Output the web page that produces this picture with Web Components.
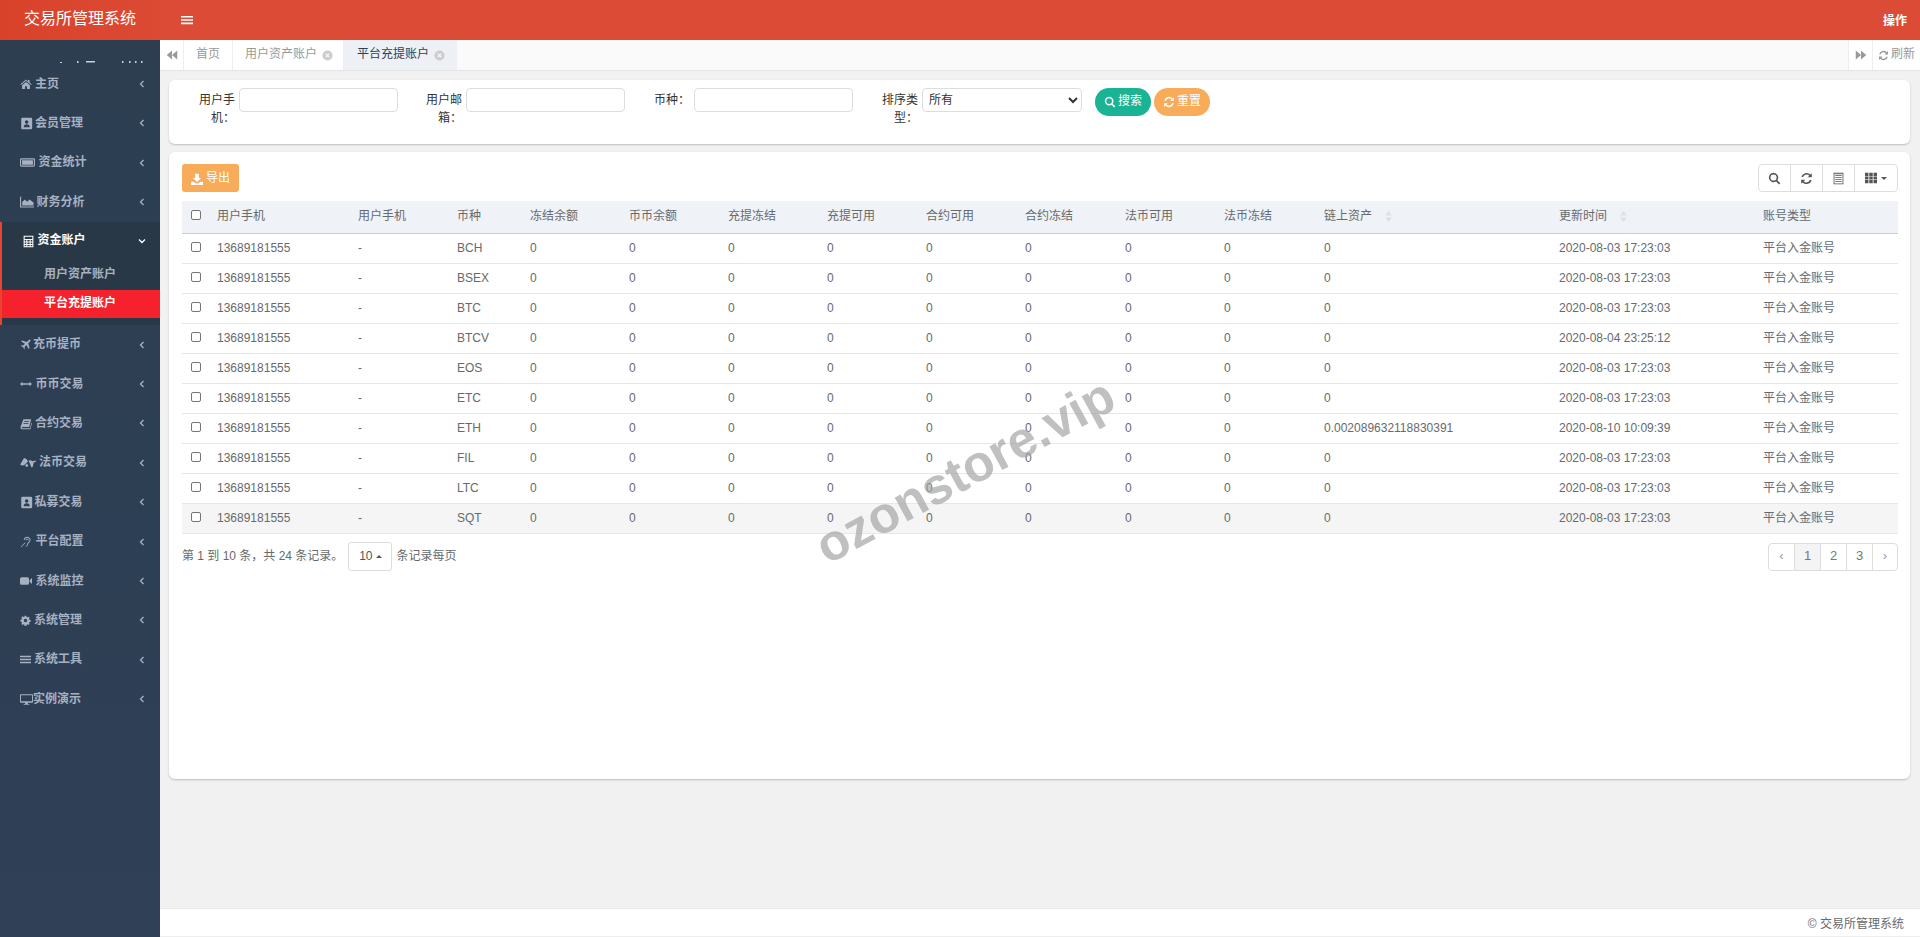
<!DOCTYPE html>
<html lang="zh">
<head>
<meta charset="utf-8">
<title>交易所管理系统</title>
<style>
  html, body { margin: 0; height: 100%; overflow: hidden; }
  body { font: 12px/1.42857 "Liberation Sans", "Noto Sans CJK SC", sans-serif; color: #676a6c; background: #f1f1f1; }
</style>
</head>
<body>
<admin-app></admin-app>
<script>
// font-awesome style icons, drawn by hand
const ICONS = {
  home: '<path d="M8 2 .5 8.400l.9 1L8 3.700l6.600 5.700.9-1-2.800-2.400V2.600h-2v2zM2.800 9.800V14.500h3.900v-3.500h2.600v3.500h3.900V9.800L8 5.300z"/>',
  card: '<path fill-rule="evenodd" d="M3 1h10.500A1.500 1.500 0 0 1 15 2.500v11a1.500 1.500 0 0 1-1.500 1.500H3a1.500 1.500 0 0 1-1.500-1.500v-11A1.500 1.500 0 0 1 3 1zm5.200 3a2.200 2.200 0 1 0 0 4.400 2.200 2.200 0 0 0 0-4.400zM4.500 12.500h7.500c0-2.200-1.400-3.500-3.700-3.500s-3.800 1.300-3.800 3.500z"/>',
  money: '<path fill-rule="evenodd" d="M1.500 3.500h13A1.500 1.500 0 0 1 16 5v6a1.500 1.500 0 0 1-1.500 1.500h-13A1.500 1.500 0 0 1 0 11V5a1.500 1.500 0 0 1 1.500-1.500zm0 1.200a.3.3 0 0 0-.3.3v6c0 .2.100.3.3.3h13c.2 0 .3-.1.3-.3V5a.3.3 0 0 0-.3-.3zM2.200 5.700h11.600v4.600H2.200z"/>',
  chart: '<path d="M0 2h1.300v11H16v1.300H0zM2.500 12V8l3-3 2.600 2.600L11 5l4.500 3.500V12z"/>',
  calc: '<path fill-rule="evenodd" d="M2 1h12v14H2zm1.300 1.300v2.700h9.400V2.300zm0 4v1.800h2v-1.800zm3.300 0v1.800h2.800v-1.800zm4.100 0v1.800h2v-1.800zM3.300 9.300v1.800h2V9.300zm3.300 0v1.800h2.800V9.300zm4.100 0v1.800h2V9.300zM3.300 12.300v1.400h2v-1.400zm3.300 0v1.400h2.800v-1.400zm4.100 0v1.400h2v-1.400z"/>',
  plane: '<path d="M15.200 1.100c-.7-.5-1.900-.2-3 .9L9.900 4.300 3 2.300 1.700 3.600l5.600 3.300-2.700 2.700-2.400-.4-1 1 3.200 1.600 1.600 3.200 1-1-.4-2.400 2.700-2.700 3.300 5.600 1.300-1.300-2-6.900 2.300-2.300c1.100-1.100 1.400-2.300.8-2.900z"/>',
  arrows: '<path d="M0 8l3.400-3v2h9.200V5L16 8l-3.400 3V9H3.400v2z"/>',
  book: '<path fill-rule="evenodd" d="M4.500 1.500H15l-2.800 10.500H3.500c-.9 0-1.200.5-1.100 1 .1.400.5.700 1.100.7h9.700l2-7.500.8.400-2.200 8.400H3.300C1.700 15 .7 14 .7 12.600c0-.4 0-.7.200-1.200zM5.500 4l-.2 1h6.500l.3-1zm-.7 2.500-.2 1h6.500l.3-1z"/>',
  law: '<path d="M4 3 .2 9.500c.6.700 1.400 1 2.300 1s1.800-.3 2.500-.9L8 6.400 6.500 4zM8.500 5.500l3 7 1.200-.5 1-4.500L16 6.800l-.4-1.400-2.800.8-2.300-.9zM7 8.500l-2 2 1.500 1.500 2-1z"/>',
  deaf: '<path d="M9.500 1C6.900 1 5 2.900 5 5.300h1.200C6.200 3.500 7.600 2.200 9.500 2.200s3.300 1.400 3.300 3.100c0 1.300-.7 1.900-1.500 2.600-.9.800-1.800 1.600-1.900 3.300-.1 1.100-.8 1.700-1.700 1.700v1.200c1.600 0 2.800-1.100 2.900-2.800.1-1.200.7-1.700 1.500-2.400C13 8 14 7 14 5.300 14 2.900 12 1 9.500 1zM9.500 3.500C8.300 3.500 7.300 4.400 7.300 5.600h1.100c0-.6.500-1 1.100-1s1.100.5 1.100 1.100h1.100c0-1.200-1-2.200-2.200-2.200zM6.500 8.500 1 14.300l.6.700 5.600-5.800z"/>',
  video: '<path d="M2 3h8a2 2 0 0 1 2 2v6a2 2 0 0 1-2 2H2a2 2 0 0 1-2-2V5a2 2 0 0 1 2-2zm10.800 4L16 4v8l-3.200-3z"/>',
  cog: '<path fill-rule="evenodd" d="M6.800 1h2.400l.4 1.900 1.200.5 1.600-1 1.700 1.700-1 1.600.5 1.200 1.900.4v2.400l-1.900.4-.5 1.200 1 1.600-1.700 1.700-1.600-1-1.200.5-.4 1.900H6.800l-.4-1.900-1.200-.5-1.600 1-1.700-1.700 1-1.600-.5-1.200L.5 9.200V6.800l1.900-.4.500-1.200-1-1.600 1.700-1.700 1.600 1 1.200-.5zM8 5.500a2.500 2.500 0 1 0 0 5 2.500 2.500 0 0 0 0-5z"/>',
  bars: '<path d="M0 2.500h16v2.200H0zM0 6.900h16v2.200H0zM0 11.300h16v2.200H0z"/>',
  desktop: '<path fill-rule="evenodd" d="M1 1.500h14A1 1 0 0 1 16 2.500v8.500a1 1 0 0 1-1 1H9.500l.4 1.500h1.600v1H4.500v-1h1.600l.4-1.500H1a1 1 0 0 1-1-1V2.500a1 1 0 0 1 1-1zm.2 1.200v7.300h13.600V2.700z"/>',
  search: '<path fill-rule="evenodd" d="M6.800 1a5.800 5.800 0 0 1 4.700 9.200l3.600 3.600-1.500 1.500-3.600-3.600A5.800 5.800 0 1 1 6.800 1zm0 2a3.800 3.800 0 1 0 0 7.600 3.800 3.800 0 0 0 0-7.600z"/>',
  refresh: '<path d="M14.500 1.500v5h-5l1.900-1.900A4.500 4.500 0 0 0 3.800 6.300H1.700A6.500 6.500 0 0 1 12.800 3.200zM1.500 14.500v-5h5l-1.900 1.900a4.500 4.500 0 0 0 7.600-1.700h2.100A6.500 6.500 0 0 1 3.200 12.800z"/>',
  list: '<path fill-rule="evenodd" d="M2 1h12v14H2zm1 1v12h10V2zm1 1.500h8v1H4zm0 2.500h8v1H4zm0 2.500h8v1H4zm0 2.500h8v1H4z"/>',
  th: '<path d="M0 1h4.600v4.200H0zM5.700 1h4.600v4.200H5.700zM11.400 1H16v4.200h-4.600zM0 5.900h4.600v4.200H0zM5.700 5.900h4.600v4.200H5.700zM11.400 5.900H16v4.200h-4.600zM0 10.800h4.600V15H0zM5.700 10.800h4.600V15H5.700zM11.400 10.800H16V15h-4.600z"/>',
  download: '<path d="M5.500 1h5v5.500h3L8 12 2.500 6.500h3zM0 11.500h3.500L6.500 14h3l3-2.500H16V16H0z"/>',
  backward: '<path d="M8 2v12L1 8zM15 2v12L8 8z"/>',
  forward: '<path d="M1 2v12l7-6zM8 2v12l7-6z"/>',
};
const icon = (name, size) =>
  `<svg width="${size}" height="${size}" viewBox="0 0 16 16" fill="currentColor" aria-hidden="true">${ICONS[name]}</svg>`;

class SideNav extends HTMLElement {
  connectedCallback() {
    // icon, label, icon size, width reserved before the label
    const items = [
      ['home', '主页', 12, 15], ['card', '会员管理', 13, 15], ['money', '资金统计', 15, 18.500], ['chart', '财务分析', 14, 16.500],
      ['calc', '资金账户', 13, 15.500, true],
      ['plane', '充币提币', 11, 13], ['arrows', '币币交易', 12, 15.500], ['book', '合约交易', 12, 15], ['law', '法币交易', 16, 19],
      ['card', '私募交易', 13, 14.500], ['deaf', '平台配置', 12, 15.500], ['video', '系统监控', 12, 15.500], ['cog', '系统管理', 11, 14],
      ['bars', '系统工具', 11, 14], ['desktop', '实例演示', 13, 13],
    ];
    const row = ([ic, label, size, width, open]) => `
      <a class="item${open ? ' open' : ''}">
        <span class="ic" style="width:${width}px">${icon(ic, size)}</span>
        <span class="lb">${label}</span>
        <svg class="arrow" width="8" height="8" viewBox="0 0 8 8" fill="none" stroke="currentColor" stroke-width="1.300">
          <path d="${open ? 'M1 2.500 4 5.500 7 2.500' : 'M5.500 1 2.500 4 5.500 7'}"/>
        </svg>
      </a>`;
    this.attachShadow({ mode: 'open' });
    this.shadowRoot.innerHTML = `
      <style>
        :host { display: block; width: 160px; flex: none; height: 100%; overflow: hidden;
          background: linear-gradient(to bottom, #2c3e50, #2f4057); color: #a7b1c2; }
        .logo { height: 40px; line-height: 38px; text-align: center; color: #fff; font-size: 16px;
          background: linear-gradient(to right, #d9422a, #dc4a34); }
        .spacer { height: 24.500px; display: flex; align-items: flex-end; }
        .spacer svg { display: block; margin-bottom: 1.500px; }
        .item { display: flex; align-items: center; height: 39.400px; padding-left: 20px; font-weight: 600; position: relative; box-sizing: border-box; }
        .ic { display: flex; align-items: center; flex: none; }
        .arrow { position: absolute; left: 138px; top: 15.500px; }
        .active { background: #293846; border-left: 2px solid #e8442f; padding-bottom: 7px; height: 103px; box-sizing: border-box; }
        .active .item { height: 38px; color: #fff; }
        .active .arrow { left: 136px; top: 15px; }
        .sub { display: block; height: 30px; line-height: 28px; padding-left: 42px; font-weight: 600; color: #a7b1c2; }
        .sub.cur { background: #f5222d; color: #fff; height: 28px; line-height: 27px; }
      </style>
      <div class="logo">交易所管理系统</div>
      <div class="spacer">
        <svg width="160" height="2" viewBox="0 0 160 2" fill="#c8d0da">
          <path d="M60 1h2v1h-2zM77 0h1.500v2H77zM86 0h9v1.500h-9zM122 0h1.500v2H122zM129 0h1.500v2H129zM135 0h1.500v2H135zM141 0h1.500v2H141z"/>
        </svg>
      </div>
      ${items.slice(0, 4).map(row).join('')}
      <div class="active">
        ${row(items[4])}
        <a class="sub">用户资产账户</a>
        <a class="sub cur">平台充提账户</a>
      </div>
      ${items.slice(5).map(row).join('')}
    `;
  }
}
customElements.define('side-nav', SideNav);

class TopBar extends HTMLElement {
  connectedCallback() {
    this.attachShadow({ mode: 'open' });
    this.shadowRoot.innerHTML = `
      <style>
        :host { display: flex; align-items: center; justify-content: space-between; height: 40px; flex: none;
          background: #db4b36; color: #fff; padding: 0 13px 0 21px; box-sizing: border-box; }
        b { font-weight: 700; font-size: 12px; position: relative; top: 2px; }
        svg { display: block; }
      </style>
      ${icon('bars', 12)}
      <b>操作</b>
    `;
  }
}
customElements.define('top-bar', TopBar);

class TabBar extends HTMLElement {
  connectedCallback() {
    const closeIcon = `<svg class="x" width="11" height="11" viewBox="0 0 11 11"><circle cx="5.500" cy="5.500" r="5" fill="#ccc"/><path d="M3.700 3.700l3.600 3.600M7.300 3.700 3.700 7.300" stroke="#f5f5f5" stroke-width="1.300"/></svg>`;
    this.attachShadow({ mode: 'open' });
    this.shadowRoot.innerHTML = `
      <style>
        :host { display: flex; height: 31px; flex: none; background: #fafafa; border-bottom: 1px solid #e4e4e4; box-sizing: border-box; color: #999; }
        .btn { display: flex; align-items: center; justify-content: center; width: 24px; flex: none; background: #fff; border-right: 1px solid #eee; color: #999; box-sizing: border-box; }
        .tabs { display: flex; flex: 1; }
        .tab { display: flex; align-items: center; gap: 5px; padding: 0 12px; background: #fff; border-right: 1px solid #eee; color: #999; }
        .tab.acct { padding-right: 10px; }
        .tab.on { background: #edf1f5; color: #2f4056; padding: 0 12px 0 13px; border-right: 0; }
        .right { border-left: 1px solid #eee; border-right: 0; }
        .reload { display: flex; align-items: center; gap: 2px; width: 48px; padding-left: 5px; box-sizing: border-box; background: #fff; color: #999; border-left: 1px solid #eee; }
      </style>
      <div class="btn">${icon('backward', 12)}</div>
      <div class="tabs">
        <div class="tab">首页</div>
        <div class="tab acct">用户资产账户${closeIcon}</div>
        <div class="tab on">平台充提账户${closeIcon}</div>
      </div>
      <div class="btn right">${icon('forward', 12)}</div>
      <div class="reload">${icon('refresh', 11)}<span>刷新</span></div>
    `;
  }
}
customElements.define('tab-bar', TabBar);

class SearchCard extends HTMLElement {
  connectedCallback() {
    this.attachShadow({ mode: 'open' });
    this.shadowRoot.innerHTML = `
      <style>
        :host { display: block; height: 64px; background: #fff; border-radius: 6px; box-shadow: 0 1px 2px rgba(0,0,0,.22); margin: 9px 10px 0 9px; box-sizing: border-box; padding: 8px 0 0 29px; color: #333; }
        form { display: flex; margin: 0; }
        .f { display: flex; width: 228px; flex: none; }
        .f.a { width: 227px; }
        label { width: 37px; margin-right: 4px; text-align: right; line-height: 18px; padding-top: 3px; }
        input, select { width: 159px; height: 24px; box-sizing: border-box; border: 1px solid #ddd; border-radius: 4px; background: #fff; outline: 0; padding: 0 0 0 2px; font: inherit; color: #333; }
        select { width: 160px; }
        .btns { display: flex; gap: 3px; margin-left: -14px; }
        button { display: flex; align-items: center; justify-content: center; gap: 2px; width: 56px; height: 28px; border: 0; border-radius: 14px; color: #fff; font: inherit; padding: 0; }
        .go { background: #1ab394; }
        .re { background: #f8ac59; }
      </style>
      <form>
        <div class="f a"><label>用户手机：</label><input></div>
        <div class="f"><label>用户邮箱：</label><input></div>
        <div class="f"><label>币种：</label><input></div>
        <div class="f"><label>排序类型：</label><select><option>所有</option></select></div>
        <div class="btns">
          <button type="button" class="go">${icon('search', 12)}搜索</button>
          <button type="button" class="re">${icon('refresh', 12)}重置</button>
        </div>
      </form>
    `;
  }
}
customElements.define('search-card', SearchCard);

class DataTable extends HTMLElement {
  connectedCallback() {
    const widths = [27, 141, 99, 73, 99, 99, 99, 99, 99, 100, 99, 100, 235, 204, 143];
    const heads = ['用户手机', '用户手机', '币种', '冻结余额', '币币余额', '充提冻结', '充提可用', '合约可用', '合约冻结', '法币可用', '法币冻结', '链上资产', '更新时间', '账号类型'];
    const rows = [
      ['BCH', '0', '2020-08-03 17:23:03'],
      ['BSEX', '0', '2020-08-03 17:23:03'],
      ['BTC', '0', '2020-08-03 17:23:03'],
      ['BTCV', '0', '2020-08-04 23:25:12'],
      ['EOS', '0', '2020-08-03 17:23:03'],
      ['ETC', '0', '2020-08-03 17:23:03'],
      ['ETH', '0.002089632118830391', '2020-08-10 10:09:39'],
      ['FIL', '0', '2020-08-03 17:23:03'],
      ['LTC', '0', '2020-08-03 17:23:03'],
      ['SQT', '0', '2020-08-03 17:23:03'],
    ];
    const sort = `<svg class="sort" width="7" height="11" viewBox="0 0 7 11" fill="#dde0e6"><path d="M3.500 0 7 4.500H0zM3.500 11 0 6.500h7z"/></svg>`;
    const cb = `<i class="cb"></i>`;
    this.attachShadow({ mode: 'open' });
    this.shadowRoot.innerHTML = `
      <style>
        :host { display: block; position: relative; height: 627px; background: #fff; border-radius: 6px; box-shadow: 0 1px 2px rgba(0,0,0,.22); margin: 8px 10px 0 9px; box-sizing: border-box; padding: 12px 12px 0 13px; }
        .bar { display: flex; justify-content: space-between; height: 28px; margin-bottom: 9px; }
        .export { display: flex; align-items: center; gap: 3px; width: 57px; justify-content: center; background: #f8ac59; color: #fff; border-radius: 3px; padding-top: 1px; box-sizing: border-box; }
        .tools { display: flex; border: 1px solid #ddd; border-radius: 4px; color: #555; box-sizing: border-box; }
        .tools span { display: flex; align-items: center; justify-content: center; gap: 4px; width: 32px; border-right: 1px solid #ddd; box-sizing: border-box; }
        .tools span:last-child { width: 42px; border-right: 0; }
        .caret { width: 0; height: 0; border: 3px solid transparent; border-top-color: #555; border-bottom: 0; }
        table { border-collapse: collapse; table-layout: fixed; width: 1716px; }
        th, td { padding: 2px 0 0 8px; height: 30px; box-sizing: border-box; text-align: left; font-weight: 400; white-space: nowrap; border-bottom: 1px solid #e7e7e7; }
        th { height: 32px; background: #eff2f7; border-bottom: 1px solid #c9ccd0; color: #676a6c; padding: 0 0 1px 8px; }
        tr.last td { background: #f5f5f5; }
        th.sel { padding: 0 0 4px 9px; }
        td.sel { padding: 0 0 2px 9px; }
        .cb { display: block; width: 10px; height: 10px; box-sizing: border-box; border: 1px solid #767676; border-radius: 2px; background: #fff; }
        .sort { margin-left: 13px; vertical-align: -2px; }
        .foot { display: flex; align-items: center; justify-content: space-between; margin-top: 9px; height: 28px; }
        .info { display: flex; align-items: center; }
        .size { display: flex; align-items: center; justify-content: center; gap: 3px; width: 44px; height: 29px; border: 1px solid #ddd; border-radius: 3px; margin: 0 4px 0 5px; box-sizing: border-box; color: #555; }
        .up { width: 0; height: 0; border: 3px solid transparent; border-bottom-color: #555; border-top: 0; }
        .pager { display: flex; height: 28px; border: 1px solid #ddd; border-radius: 4px; box-sizing: border-box; color: #777; }
        .pager span { display: flex; align-items: center; justify-content: center; width: 26px; border-right: 1px solid #ddd; font-size: 13px; box-sizing: border-box; }
        .pager span:first-child { width: 26px; color: #999; }
        .pager span:last-child { width: 24px; color: #999; border-right: 0; }
        .pager .on { background: #f4f4f4; }
        .mark { position: absolute; left: 630px; top: 293px; font: 700 51px/1 "Liberation Sans", sans-serif; color: rgba(160,160,160,.66); transform: rotate(-28.500deg); transform-origin: center; pointer-events: none; white-space: nowrap; }
      </style>
      <div class="bar">
        <div class="export">${icon('download', 12)}导出</div>
        <div class="tools">
          <span>${icon('search', 13)}</span>
          <span>${icon('refresh', 13)}</span>
          <span>${icon('list', 13)}</span>
          <span>${icon('th', 12)}<i class="caret"></i></span>
        </div>
      </div>
      <table>
        <colgroup>${widths.map(w => `<col style="width:${w}px">`).join('')}</colgroup>
        <thead><tr>
          <th class="sel">${cb}</th>
          ${heads.map((h, i) => `<th>${h}${i === 11 || i === 12 ? sort : ''}</th>`).join('')}
        </tr></thead>
        <tbody>
          ${rows.map((r, i) => `<tr class="${i === 9 ? 'last' : ''}">
            <td class="sel">${cb}</td>
            <td>13689181555</td><td>-</td><td>${r[0]}</td>
            ${'<td>0</td>'.repeat(8)}
            <td>${r[1]}</td><td>${r[2]}</td><td>平台入金账号</td>
          </tr>`).join('')}
        </tbody>
      </table>
      <div class="foot">
        <div class="info">第 1 到 10 条，共 24 条记录。<span class="size">10<i class="up"></i></span>条记录每页</div>
        <div class="pager"><span>‹</span><span class="on">1</span><span>2</span><span>3</span><span>›</span></div>
      </div>
      <div class="mark">ozonstore.vip</div>
    `;
  }
}
customElements.define('data-table', DataTable);

class PageFooter extends HTMLElement {
  connectedCallback() {
    this.attachShadow({ mode: 'open' });
    this.shadowRoot.innerHTML = `
      <style>
        :host { display: block; margin-top: auto; height: 29px; flex: none; background: #fff; border-top: 1px solid #e7eaec; border-bottom: 1px solid #eee; box-sizing: border-box; text-align: right; padding-right: 16px; line-height: 30px; color: #676a6c; }
      </style>
      © 交易所管理系统
    `;
  }
}
customElements.define('page-footer', PageFooter);

class AdminApp extends HTMLElement {
  connectedCallback() {
    this.attachShadow({ mode: 'open' });
    this.shadowRoot.innerHTML = `
      <style>
        :host { display: flex; height: 937px; width: 1920px; overflow: hidden; }
        main { flex: 1; display: flex; flex-direction: column; min-width: 0; }
      </style>
      <side-nav></side-nav>
      <main>
        <top-bar></top-bar>
        <tab-bar></tab-bar>
        <search-card></search-card>
        <data-table></data-table>
        <page-footer></page-footer>
      </main>
    `;
  }
}
customElements.define('admin-app', AdminApp);
</script>
</body>
</html>
